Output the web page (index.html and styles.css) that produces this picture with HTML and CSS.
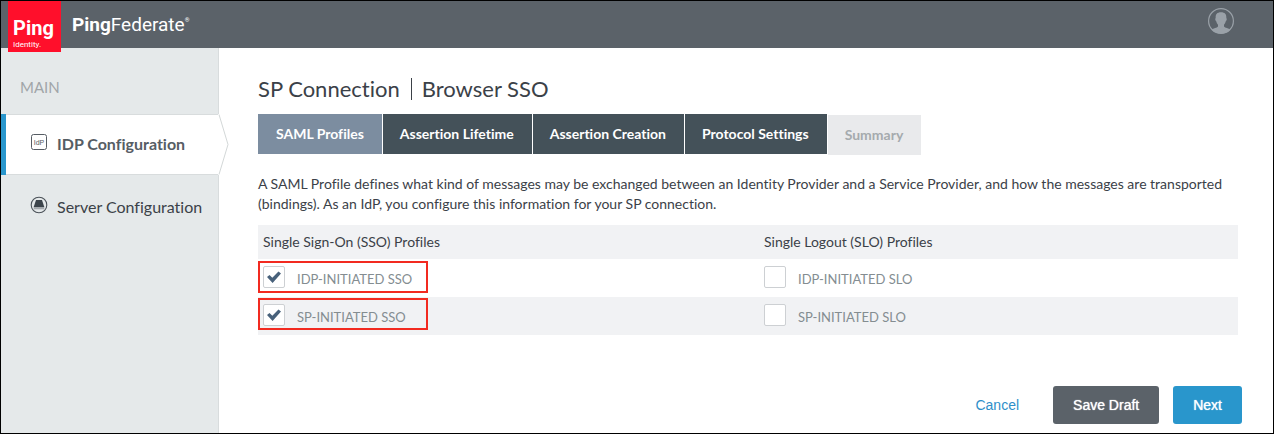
FILE: index.html
```html
<!DOCTYPE html>
<html lang="en">
<head>
<meta charset="utf-8">
<title>PingFederate</title>
<link rel="stylesheet" href="styles.css">
</head>
<body>
<div class="app">
  <header class="topbar">
    <a class="logo" href="#"><span class="logo-name">Ping</span><span class="logo-sub">Identity.</span></a>
    <div class="product"><b>Ping</b>Federate<sup>®</sup></div>
    <button class="account" type="button" aria-label="Account">
      <svg width="28" height="28" viewBox="0 0 28 28">
        <circle cx="14" cy="14" r="12.4" fill="none" stroke="#9aa1a8" stroke-width="1.2"/>
        <path fill="#9aa1a8" d="M14 5.200c3.900 0 5.600 2.200 5.300 5.400l.4 1.500c.2 1-.3 1.900-.9 2.200-.4 1.600-1 2.700-1.800 3.500v1.600c1.100 1.500 4.400 1.600 6.500 3.100A12.400 12.400 0 0 1 14 26.400 12.400 12.400 0 0 1 4.500 22.500c2.100-1.500 5.400-1.600 6.500-3.100v-1.600c-.8-.8-1.400-1.900-1.800-3.500-.6-.3-1.100-1.200-.9-2.200l.4-1.500c-.3-3.200 1.400-5.400 5.300-5.400z"/>
      </svg>
    </button>
  </header>
  <div class="body">
    <nav class="sidebar">
      <div class="nav-title">MAIN</div>
      <a class="nav-item active" href="#">
        <svg class="nav-icon" width="18" height="18" viewBox="0 0 18 18">
          <rect x="1.500" y="1.500" width="15" height="15" rx="2" fill="#fff" stroke="#565d64"/>
          <text class="idp" x="9" y="12" text-anchor="middle">IdP</text>
        </svg>
        IDP Configuration
        <svg class="pointer" width="11" height="61" viewBox="0 0 11 61">
          <path d="M0 0H1L10 30.500L1 61H0z" fill="#fff"/>
          <path d="M1 0.500L10 30.500L1 60.500" fill="none" stroke="#d3d7d8"/>
        </svg>
      </a>
      <a class="nav-item" href="#">
        <svg class="nav-icon" width="18" height="18" viewBox="0 0 18 18">
          <circle cx="9" cy="9" r="7.800" fill="none" stroke="#4a5158" stroke-width="1.100"/>
          <path d="M6 4h6l2.300 7H3.700z" fill="#3c444b"/>
          <path d="M3.700 11h10.600v2.300H3.700z" fill="#a4a9ad"/>
        </svg>
        Server Configuration
      </a>
    </nav>
    <main class="content">
      <h1 class="title"><span>SP Connection</span><span class="title-part">Browser SSO</span></h1>
      <div class="tabs">
        <button class="tab current" type="button">SAML Profiles</button>
        <button class="tab" type="button">Assertion Lifetime</button>
        <button class="tab" type="button">Assertion Creation</button>
        <button class="tab" type="button">Protocol Settings</button>
        <button class="tab off" type="button" disabled>Summary</button>
      </div>
      <p class="intro">A SAML Profile defines what kind of messages may be exchanged between an Identity Provider and a Service Provider, and how the messages are transported (bindings). As an IdP, you configure this information for your SP connection.</p>
      <table class="profiles">
        <thead>
          <tr><th>Single Sign-On (SSO) Profiles</th><th>Single Logout (SLO) Profiles</th></tr>
        </thead>
        <tbody>
          <tr>
            <td><span class="mark"></span><label class="option"><input type="checkbox" class="check" checked><span class="option-text">IDP-INITIATED SSO</span></label></td>
            <td><label class="option"><input type="checkbox" class="check"><span class="option-text">IDP-INITIATED SLO</span></label></td>
          </tr>
          <tr>
            <td><span class="mark"></span><label class="option"><input type="checkbox" class="check" checked><span class="option-text">SP-INITIATED SSO</span></label></td>
            <td><label class="option"><input type="checkbox" class="check"><span class="option-text">SP-INITIATED SLO</span></label></td>
          </tr>
        </tbody>
      </table>
      <footer class="actions">
        <a class="cancel" href="#">Cancel</a>
        <button class="btn" type="button">Save Draft</button>
        <button class="btn primary" type="button">Next</button>
      </footer>
    </main>
  </div>
</div>
</body>
</html>
```
FILE: styles.css
```css
* { box-sizing: border-box; }
body { margin: 0; background: #fff; color: #3b4148; font-family: Lato, "Open Sans", sans-serif; font-size: 14px; font-variant-ligatures: none; }
a { text-decoration: none; color: inherit; }
button { border: 0; font: inherit; cursor: pointer; }
.app { min-height: 100vh; border: 1px solid #000; display: flex; flex-direction: column; }

.topbar { display: flex; align-items: center; height: 47px; padding: 0 38px 0 7px; background: #5b6269; color: #fff; }
.logo { display: flex; flex-direction: column; align-self: flex-start; width: 53px; height: 51px; padding: 16px 0 0 5px; background: #ff0f2b; color: #fff; font-family: Roboto, sans-serif; position: relative; z-index: 1; }
.logo-name { font-size: 20px; line-height: 23px; font-weight: 700; }
.logo-sub { font-size: 8px; line-height: 9px; }
.product { margin-left: 11px; font-family: Roboto, sans-serif; font-size: 19px; line-height: 24px; }
.product sup { font-size: 6px; vertical-align: 9px; line-height: 0; }
.account { margin-left: auto; margin-bottom: 8px; padding: 0; background: none; display: flex; }

.body { flex: 1; display: flex; }
.sidebar { width: 218px; flex: none; background: #e5e9ea; border-right: 1px solid #d8dcdd; }
.nav-title { padding: 29px 19px 17px; color: #a0a5a8; font-size: 15px; line-height: 20px; }
.nav-item { display: flex; align-items: center; gap: 9px; height: 63px; padding-left: 29px; font-size: 16px; }
.nav-item.active { height: 61px; padding: 0 0 2px 24px; border-left: 5px solid #2996cc; background: #fff; color: #565d64; font-weight: 700; position: relative; box-shadow: inset 0 1px #d8dcdd, inset 0 -1px #d8dcdd; }
.nav-icon { flex: none; margin-bottom: 3px; }
.idp { font: 7px "Liberation Sans", sans-serif; fill: #565d64; }
.pointer { position: absolute; top: 0; left: 100%; }

.content { flex: 1; min-width: 0; display: flex; flex-direction: column; padding: 28px 35px 9px 39px; }
.title { display: flex; align-items: center; margin: 0; font-size: 22px; line-height: 26px; font-weight: 400; }
.title-part { border-left: 1px solid #3b4148; margin-left: 11px; padding-left: 10px; line-height: 22px; }
.tabs { display: flex; gap: 1px; margin-top: 12px; }
.tab { height: 40px; padding: 0 18px 2px 17px; background: #445159; color: #fff; font-size: 14px; font-weight: 700; }
.tab.current { padding-left: 18px; background: #7c8da0; }
.tab.off { margin-top: 1px; background: #e9eaec; color: #a5aaae; cursor: default; }
.intro { margin: 19px 0 11px; line-height: 20px; }
.profiles { width: 100%; border-collapse: collapse; table-layout: fixed; }
.profiles th { height: 34px; padding: 0 5px 2px; background: #f1f2f4; text-align: left; font-weight: 400; }
.profiles th:first-child { width: 501px; }
.profiles td { position: relative; height: 38px; padding: 0 5px 2px; }
.profiles tbody tr:nth-child(even) { background: #f1f2f4; }
.option { display: flex; align-items: center; gap: 12px; color: #848d91; }
.option-text { padding-top: 4px; line-height: 18px; font-size: 13px; }
.check { appearance: none; flex: none; width: 22px; height: 22px; margin: 0; border: 1px solid #cdd0d3; border-radius: 2px; background: #fff; display: grid; place-items: center; }
.check:checked::after { content: ""; width: 14px; height: 12px; background: #48617b; clip-path: polygon(0 50%, 18% 34%, 38% 56%, 82% 4%, 100% 20%, 40% 100%); }
.mark { position: absolute; top: 1px; left: 0; width: 170px; height: 32px; border: 2px solid #f22a20; pointer-events: none; }
tr:first-child .mark { top: 2px; }

.actions { display: flex; align-items: center; justify-content: flex-end; margin-top: auto; padding-top: 20px; margin-right: -4px; font: 14px "Liberation Sans", sans-serif; }
.cancel { margin-right: 34px; color: #2e8fc9; }
.btn { height: 38px; padding: 0 20px; border-radius: 3px; background: #5b6269; color: #fff; text-shadow: 0 0 1px #fff; }
.btn.primary { margin-left: 14px; background: #2996cc; }
```
